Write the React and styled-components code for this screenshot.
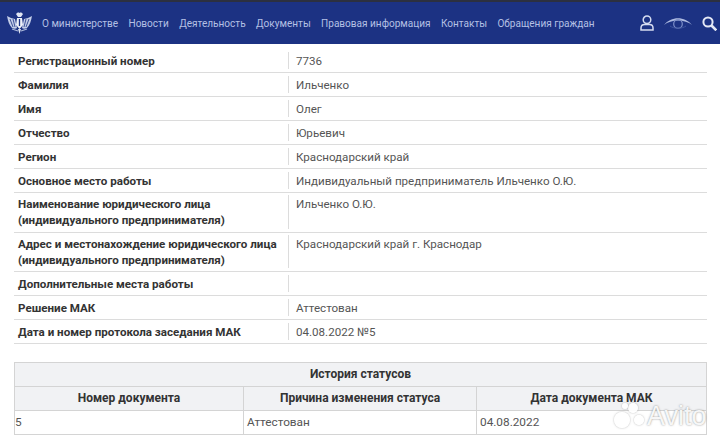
import styled, { createGlobalStyle } from "styled-components";

const GlobalStyle = createGlobalStyle`
  html, body {
    margin: 0;
    padding: 0;
    background: #fff;
    font-family: Roboto, "Liberation Sans", sans-serif;
  }
`;

const navItems = [
  "О министерстве",
  "Новости",
  "Деятельность",
  "Документы",
  "Правовая информация",
  "Контакты",
  "Обращения граждан",
];

const rows = [
  { label: "Регистрационный номер", value: "7736" },
  { label: "Фамилия", value: "Ильченко" },
  { label: "Имя", value: "Олег" },
  { label: "Отчество", value: "Юрьевич" },
  { label: "Регион", value: "Краснодарский край" },
  { label: "Основное место работы", value: "Индивидуальный предприниматель Ильченко О.Ю." },
  { label: "Наименование юридического лица (индивидуального предпринимателя)", value: "Ильченко О.Ю.", tall: true },
  { label: "Адрес и местонахождение юридического лица (индивидуального предпринимателя)", value: "Краснодарский край г. Краснодар", tall: true },
  { label: "Дополнительные места работы", value: "" },
  { label: "Решение МАК", value: "Аттестован" },
  { label: "Дата и номер протокола заседания МАК", value: "04.08.2022 №5" },
];

// герб в шапке
const Emblem = () => (
  <EmblemSvg width="25" height="22" viewBox="0 0 25 22" fill="none">
    <path d="M0 4c1 5 2 9 5 12 2 1 4 1 5 0L8 7 4 6z" fill="#c3cde8" />
    <path d="M25 4c-1 5-2 9-5 12-2 1-4 1-5 0l2-9 4-1z" fill="#c3cde8" />
    <path d="M3 7l3 8M6 7l2 8M22 7l-3 8M19 7l-2 8" stroke="#1c3283" strokeWidth="0.8" />
    <path d="M9 2c1-1 2-2 3.500-1C14 0 15 1 16 2l-2 3h-3z" fill="#dfe4f2" />
    <path d="M10 6h5l1 7-3.500 4L9 13z" fill="#eef1f9" />
    <path d="M12.500 7v7" stroke="#1c3283" strokeWidth="1.300" />
    <path d="M5 17l6 2M20 17l-6 2" stroke="#aab7da" strokeWidth="1.300" />
    <path d="M11 17h3l-1.500 5z" fill="#dfe4f2" />
  </EmblemSvg>
);

const UserIcon = () => (
  <svg width="14" height="16" viewBox="0 0 14 16" fill="none" stroke="#d5dcf0" strokeWidth="1.500">
    <circle cx="7" cy="4.800" r="3.800" />
    <path d="M1 15v-2c0-2 1.500-3.500 3.500-3.500h5c2 0 3.500 1.500 3.500 3.500v2z" />
  </svg>
);

const EyeIcon = () => (
  <svg width="30" height="14" viewBox="0 0 30 14" fill="none">
    <path d="M1 9C8 0 22 0 29 9C22 3 8 3 1 9z" fill="#aebbe0" />
    <circle cx="15" cy="8" r="4.300" stroke="#7e90c8" strokeWidth="1.200" />
    <path d="M7 10c4 3 12 3 16 0" stroke="#3e55a0" strokeWidth="1" />
  </svg>
);

const SearchIcon = () => (
  <svg width="15" height="15" viewBox="0 0 15 15" fill="none" stroke="#e4e8f5" strokeWidth="2">
    <circle cx="6" cy="6" r="4.600" />
    <path d="M9.500 9.500l4.800 4.800" strokeWidth="2.600" />
  </svg>
);

const App = () => (
  <Page>
    <GlobalStyle />
    <Header>
      <Emblem />
      <Nav>
        {navItems.map((item) => (
          <NavLink key={item}>{item}</NavLink>
        ))}
      </Nav>
      <Tools>
        <UserIcon />
        <EyeIcon />
        <SearchIcon />
      </Tools>
    </Header>

    <Content>
      <InfoTable>
        {rows.map((row) => (
          <InfoRow key={row.label} $tall={row.tall}>
            <InfoLabel>{row.label}</InfoLabel>
            <InfoValue>{row.value}</InfoValue>
          </InfoRow>
        ))}
      </InfoTable>

      <History>
        <HistoryTitle>История статусов</HistoryTitle>
        <HistoryGrid>
          <HistoryHead>Номер документа</HistoryHead>
          <HistoryHead>Причина изменения статуса</HistoryHead>
          <HistoryHead>Дата документа МАК</HistoryHead>
          <HistoryCell $flush>5</HistoryCell>
          <HistoryCell>Аттестован</HistoryCell>
          <HistoryCell>04.08.2022</HistoryCell>
        </HistoryGrid>
      </History>
    </Content>

    <Watermark>
      <Blobs>
        <Blob $size={16} $x={0} $y={14} />
        <Blob $size={10} $x={14} $y={5} />
        <Blob $size={10} $x={20} $y={17} />
        <Blob $size={6} $x={8} $y={5} />
      </Blobs>
      Avito
    </Watermark>
  </Page>
);

export default App;

const Page = styled.div`
  position: relative;
  width: 720px;
  height: 442px;
  overflow: hidden;
  background: #fff;
`;

const Header = styled.header`
  display: flex;
  align-items: center;
  box-sizing: border-box;
  height: 44px;
  padding: 0 3px 0 7px;
  background: #1c3283;
  border-top: 2px solid #2c3040;
`;

const EmblemSvg = styled.svg`
  flex-shrink: 0;
`;

const Nav = styled.nav`
  display: flex;
  gap: 10.400px;
  margin-left: 10px;
`;

const NavLink = styled.a`
  font-size: 10.050px;
  color: #b4c0e4;
  white-space: nowrap;
`;

const Tools = styled.div`
  display: flex;
  align-items: center;
  gap: 9px;
  margin-left: auto;
`;

const Content = styled.main`
  padding: 5px 13px 0 14px;
`;

const InfoTable = styled.div`
  display: flex;
  flex-direction: column;
`;

const InfoRow = styled.div`
  display: grid;
  grid-template-columns: 274px 1fr;
  box-sizing: border-box;
  height: ${(p) => (p.$tall ? "39.500px" : "24px")};
  padding: ${(p) => (p.$tall ? "2px" : "3px")} 0 3px;
  border-bottom: 1px solid #dcdcdc;
`;

const InfoLabel = styled.div`
  padding: 1px 4px 0 4px;
  font-size: 11.600px;
  font-weight: 700;
  line-height: 16px;
  color: #333;
`;

const InfoValue = styled.div`
  padding: 1px 0 0 7px;
  font-size: 11.600px;
  line-height: 16px;
  color: #555;
  border-left: 1px solid #dcdcdc;
`;

const History = styled.section`
  margin-top: 18px;
  border: 1px solid #d4d4d4;
`;

const HistoryTitle = styled.div`
  height: 23px;
  font-size: 12px;
  font-weight: 700;
  line-height: 22px;
  text-align: center;
  color: #333;
  background: #f1f2f4;
  border-bottom: 1px solid #d4d4d4;
`;

const HistoryGrid = styled.div`
  display: grid;
  grid-template-columns: 228px 233px 1fr;
`;

const HistoryHead = styled.div`
  height: 23px;
  font-size: 12px;
  font-weight: 700;
  line-height: 23px;
  text-align: center;
  color: #333;
  background: #f1f2f4;
  border-bottom: 1px solid #d4d4d4;
  & + & {
    border-left: 1px solid #d4d4d4;
  }
`;

const HistoryCell = styled.div`
  height: 23px;
  padding-left: ${(p) => (p.$flush ? "0" : "3px")};
  font-size: 11.800px;
  line-height: 23px;
  color: #555;
  & + & {
    border-left: 1px solid #d4d4d4;
  }
`;

const Watermark = styled.div`
  position: absolute;
  left: 614px;
  top: 398px;
  padding: 3px 0 0 33px;
  font-family: "Liberation Sans", sans-serif;
  font-size: 27px;
  line-height: 30px;
  color: rgba(255, 255, 255, 0.92);
  text-shadow: 0 0 2px rgba(90, 90, 90, 0.7);
`;

const Blobs = styled.div`
  position: absolute;
  left: 0;
  top: 0;
  width: 32px;
  height: 32px;
`;

const Blob = styled.span`
  position: absolute;
  left: ${(p) => p.$x}px;
  top: ${(p) => p.$y}px;
  width: ${(p) => p.$size}px;
  height: ${(p) => p.$size}px;
  border-radius: 50%;
  background: rgba(255, 255, 255, 0.92);
  box-shadow: 0 0 2px rgba(90, 90, 90, 0.5);
`;
